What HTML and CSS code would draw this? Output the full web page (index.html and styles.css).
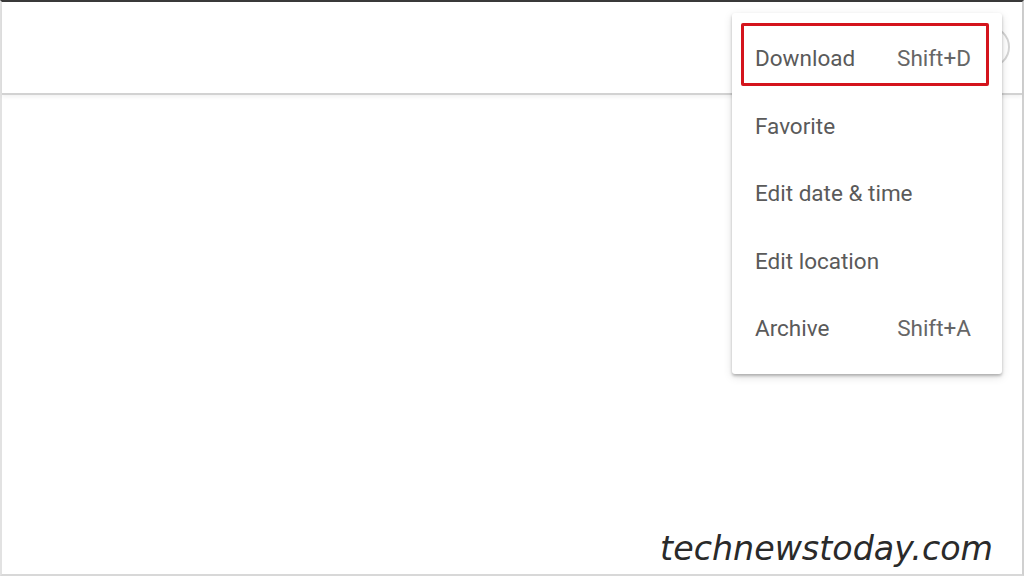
FILE: index.html
```html
<!DOCTYPE html>
<html>
<head>
<meta charset="utf-8">
<link rel="stylesheet" href="styles.css">
</head>
<body>
<div class="frame">
  <header class="topbar">
    <span class="avatar"></span>
  </header>
  <main class="content">
    <div class="watermark">technewstoday.com</div>
  </main>
  <div class="menu">
    <div class="item highlighted"><span>Download</span><span class="key">Shift+D</span></div>
    <div class="item"><span>Favorite</span></div>
    <div class="item"><span>Edit date &amp; time</span></div>
    <div class="item"><span>Edit location</span></div>
    <div class="item"><span>Archive</span><span class="key">Shift+A</span></div>
  </div>
</div>
</body>
</html>
```
FILE: styles.css
```css
html, body {
  margin: 0;
  padding: 0;
  background: #fff;
}
.frame {
  position: relative;
  width: 1024px;
  height: 576px;
  box-sizing: border-box;
  border-top: 2px solid #3a3a3a;
  border-left: 2px solid #e2e2e2;
  border-right: 2px solid #d0d0d0;
  border-bottom: 2px solid #d8d8d8;
  display: flex;
  flex-direction: column;
  font-family: Roboto, "Liberation Sans", sans-serif;
}
.topbar {
  height: 91px;
  flex: none;
  border-bottom: 2px solid #d2d2d2;
  box-shadow: 0 2px 4px rgba(0,0,0,0.06);
  position: relative;
}
.avatar {
  position: absolute;
  right: 12px;
  top: 24px;
  width: 42px;
  height: 42px;
  border-radius: 50%;
  border: 2px solid #d4d4d4;
  box-sizing: border-box;
}
.content {
  flex: 1;
  display: flex;
  align-items: flex-end;
  justify-content: flex-end;
  padding: 0 29px 5px 0;
}
.watermark {
  font-family: "DejaVu Sans", sans-serif;
  font-style: italic;
  font-size: 33.3px;
  line-height: 1.2;
  color: #2a2a2a;
}
.menu {
  position: absolute;
  left: 730px;
  top: 11px;
  width: 270px;
  background: #fff;
  box-shadow: 0 2px 3px rgba(0,0,0,0.25), 0 3px 10px rgba(0,0,0,0.12);
  border-radius: 3px;
  padding: 10px 0 12px;
  box-sizing: border-box;
}
.item {
  height: 67.5px;
  display: flex;
  align-items: center;
  justify-content: space-between;
  padding: 0 31px 0 23px;
  font-size: 22.5px;
  color: #5a5a5a;
  box-sizing: border-box;
}
.item.highlighted {
  height: 63px;
  margin: 0 13px 6px 9px;
  padding: 6px 15px 0 11px;
  border: 3px solid #d4141c;
  border-radius: 2px;
}
.key {
  color: #666;
}
```
